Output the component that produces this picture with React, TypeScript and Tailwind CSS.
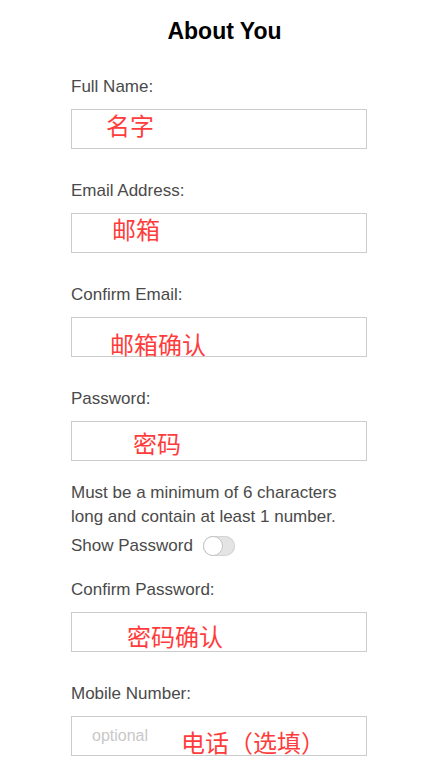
import React from "react";

const red = "absolute text-[24px] leading-none text-[#ff3c3c] whitespace-nowrap pointer-events-none";
const cjk = { fontFamily: '"Noto Sans CJK SC", sans-serif' };

function Label({ children, mt }: { children: React.ReactNode; mt: string }) {
  return <div className={`${mt} text-[17px] leading-[24px] text-[#4a4a4a]`}>{children}</div>;
}

function Box({ children, placeholder }: { children?: React.ReactNode; placeholder?: string }) {
  return (
    <div className="relative mt-[10px] flex h-[40px] w-[296px] items-center border border-[#cccccc] bg-white px-[20px]">
      {placeholder && <span className="text-[16px] leading-[24px] text-[#c8c8c8]">{placeholder}</span>}
      {children}
    </div>
  );
}

export default function App() {
  return (
    <div className="min-h-[765px] w-[421px] bg-white" style={{ fontFamily: '"Liberation Sans", Arial, sans-serif' }}>
      <div className="pl-[28px] pt-[17px] text-center text-[23px] font-bold leading-[28px] text-black">About You</div>
      <div className="flex flex-col items-start pl-[71px]">
        <Label mt="mt-[30px]">Full Name:</Label>
        <Box>
          <span className={`${red} left-[34px] top-[3px]`} style={cjk}>名字</span>
        </Box>
        <Label mt="mt-[30px]">Email Address:</Label>
        <Box>
          <span className={`${red} left-[40px] top-[3px]`} style={cjk}>邮箱</span>
        </Box>
        <Label mt="mt-[30px]">Confirm Email:</Label>
        <Box>
          <span className={`${red} left-[38px] top-[14px]`} style={cjk}>邮箱确认</span>
        </Box>
        <Label mt="mt-[30px]">Password:</Label>
        <Box>
          <span className={`${red} left-[61px] top-[9px]`} style={cjk}>密码</span>
        </Box>
        <div className="mt-[20px] text-[17px] leading-[24px] text-[#4a4a4a]">
          Must be a minimum of 6 characters
          <br />
          long and contain at least 1 number.
        </div>
        <div className="mt-[5px] flex items-center gap-[10px] text-[17px] leading-[24px] text-[#4a4a4a]">
          <span>Show Password</span>
          <span className="flex h-[20px] w-[32px] items-center rounded-full bg-[#e4e4e4] shadow-[inset_0_0_0_1px_#d4d4d4]">
            <span className="h-[20px] w-[20px] rounded-full border border-[#c4c4c4] bg-white" />
          </span>
        </div>
        <Label mt="mt-[20px]">Confirm Password:</Label>
        <Box>
          <span className={`${red} left-[55px] top-[11px]`} style={cjk}>密码确认</span>
        </Box>
        <Label mt="mt-[30px]">Mobile Number:</Label>
        <Box placeholder="optional">
          <span className={`${red} left-[109px] top-[13px]`} style={cjk}>电话（选填）</span>
        </Box>
      </div>
    </div>
  );
}
